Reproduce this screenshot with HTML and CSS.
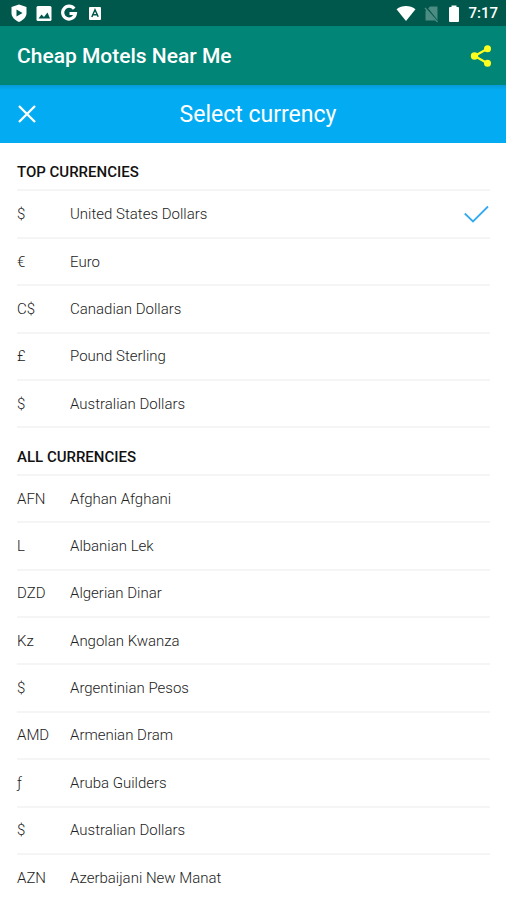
FILE: index.html
```html
<!DOCTYPE html>
<html lang="en">
<head>
<meta charset="utf-8">
<meta name="viewport" content="width=device-width, initial-scale=1">
<title>Select currency</title>
<link rel="stylesheet" href="styles.css">
</head>
<body>
<div class="status">
  <div class="status-group notifications">
    <svg width="18" height="20" viewBox="0 0 18 20"><path fill="#fff" d="M9 1.500L16.500 4v6c0 4-3 7-7.500 9C4.500 17 1.500 14 1.500 10V4z"/><path fill="#00574b" d="M6.500 6.500v7l6-3.500z"/></svg>
    <svg width="16" height="20" viewBox="0 0 16 20"><rect x=".5" y="3" width="15" height="15" rx="1.500" fill="#fff"/><path fill="#00574b" d="M2.500 15.500l3-4 2.500 2.500 3.500-4.500 2.500 6z"/></svg>
    <svg width="18" height="20" viewBox="0 0 18 20"><path fill="none" stroke="#fff" stroke-width="3.200" d="M14.200 5.800A6.400 6.400 0 1 0 15.400 10.500H9.500"/></svg>
    <svg width="16" height="20" viewBox="0 0 16 20"><rect x="3" y="4" width="12" height="13" rx="1" fill="#fff"/><path fill="none" stroke="#00574b" stroke-width="1.500" d="M5.800 14L9 6.800l3.200 7M7 11.700h4"/></svg>
  </div>
  <div class="status-group">
    <svg width="20" height="20" viewBox="0 0 20 20"><path fill="#fff" d="M.5 6.200C6 2 14 2 19.500 6.200L10 18z"/></svg>
    <svg width="16" height="20" viewBox="0 0 16 20"><path fill="#4d8c83" d="M6 3.500h7.500v14h-12V8z"/><path fill="none" stroke="#00574b" stroke-width="1.800" d="M2 4l12 15"/><path fill="none" stroke="#4d8c83" stroke-width="1.300" d="M1 5l12.500 14"/></svg>
    <svg width="12" height="20" viewBox="0 0 12 20"><path fill="#fff" d="M3.500 2.500h5V4H10a1 1 0 0 1 1 1v13a1 1 0 0 1-1 1H2a1 1 0 0 1-1-1V5a1 1 0 0 1 1-1h1.500z"/></svg>
    <span class="clock">7:17</span>
  </div>
</div>
<header class="appbar">
  <h1>Cheap Motels Near Me</h1>
  <button class="icon-button" type="button" aria-label="Share">
    <svg width="22" height="24" viewBox="0 0 22 24"><path fill="none" stroke="#ffff1f" stroke-width="2.200" d="M17.500 4.800L4.500 12l13 7.200"/><g fill="#ffff1f"><circle cx="17.500" cy="4.800" r="3.500"/><circle cx="4.500" cy="12" r="3.700"/><circle cx="17.500" cy="19.200" r="3.500"/></g></svg>
  </button>
</header>
<div class="titlebar">
  <button class="icon-button" type="button" aria-label="Close">
    <svg width="18" height="18" viewBox="0 0 18 18"><path fill="none" stroke="#fff" stroke-width="2.300" d="M1 1l16 16M17 1L1 17"/></svg>
  </button>
  <h2>Select currency</h2>
</div>
<main>
  <section class="group top">
    <h3>TOP CURRENCIES</h3>
    <button class="row" type="button" aria-pressed="true"><span class="code">$</span><span class="name">United States Dollars</span>
      <svg width="26" height="18" viewBox="0 0 26 18"><path fill="none" stroke="#36aaf0" stroke-width="1.800" d="M.8 8.500l8.200 8L24 1.500"/></svg>
    </button>
    <button class="row" type="button"><span class="code">€</span><span class="name">Euro</span></button>
    <button class="row" type="button"><span class="code">C$</span><span class="name">Canadian Dollars</span></button>
    <button class="row" type="button"><span class="code">£</span><span class="name">Pound Sterling</span></button>
    <button class="row" type="button"><span class="code">$</span><span class="name">Australian Dollars</span></button>
  </section>
  <section class="group all">
    <h3>ALL CURRENCIES</h3>
    <button class="row" type="button"><span class="code">AFN</span><span class="name">Afghan Afghani</span></button>
    <button class="row" type="button"><span class="code">L</span><span class="name">Albanian Lek</span></button>
    <button class="row" type="button"><span class="code">DZD</span><span class="name">Algerian Dinar</span></button>
    <button class="row" type="button"><span class="code">Kz</span><span class="name">Angolan Kwanza</span></button>
    <button class="row" type="button"><span class="code">$</span><span class="name">Argentinian Pesos</span></button>
    <button class="row" type="button"><span class="code">AMD</span><span class="name">Armenian Dram</span></button>
    <button class="row" type="button"><span class="code">ƒ</span><span class="name">Aruba Guilders</span></button>
    <button class="row" type="button"><span class="code">$</span><span class="name">Australian Dollars</span></button>
    <button class="row" type="button"><span class="code">AZN</span><span class="name">Azerbaijani New Manat</span></button>
  </section>
</main>
</body>
</html>
```
FILE: styles.css
```css
* {
  box-sizing: border-box;
}

body {
  display: flex;
  flex-direction: column;
  min-height: 100vh;
  margin: 0;
  background: #fff;
  color: #222;
  font-family: Roboto, "Liberation Sans", sans-serif;
}

h1, h2, h3 {
  margin: 0;
}

svg {
  display: block;
  flex: none;
}

button {
  padding: 0;
  border: 0;
  background: none;
  color: inherit;
  font: inherit;
  text-align: left;
}

.status {
  display: flex;
  align-items: center;
  justify-content: space-between;
  height: 26px;
  padding: 0 8px 0 10px;
  background: #00574b;
  color: #fff;
}

.status-group {
  display: flex;
  align-items: center;
  gap: 8px;
}

.clock {
  font-size: 15px;
  font-weight: 500;
}

.appbar {
  display: flex;
  align-items: center;
  justify-content: space-between;
  height: 59px;
  padding: 0 14px 0 17px;
  background: #008577;
  color: #fff;
}

.appbar h1 {
  font-size: 21px;
  font-weight: 500;
}

.titlebar {
  display: grid;
  grid-template-columns: 24px 1fr 14px;
  align-items: center;
  height: 58px;
  padding: 0 18px;
  background: linear-gradient(#0799d8, #03acf2 5px);
  color: #fff;
}

.titlebar h2 {
  font-size: 23px;
  font-weight: 400;
  text-align: center;
}

main {
  display: flex;
  flex: 1;
  flex-direction: column;
  padding: 1px 16px 0 17px;
}

.group {
  display: grid;
  grid-auto-rows: minmax(44px, 1fr);
}

.top {
  flex: 6 0 0;
}

.all {
  flex: 9 0 45px;
  grid-template-rows: repeat(9, minmax(44px, 1fr)) 45px;
}

.group h3,
.row {
  display: flex;
  align-items: center;
  border-bottom: 2px solid #f5f5f5;
}

.group h3 {
  padding-top: 11px;
  color: #111;
  font-size: 15px;
  font-weight: 500;
}

.row {
  font-size: 15px;
  font-weight: 300;
}

.all .row:last-child {
  border-bottom: 0;
}

.code {
  flex: none;
  width: 53px;
}

.name {
  flex: 1;
}
```
